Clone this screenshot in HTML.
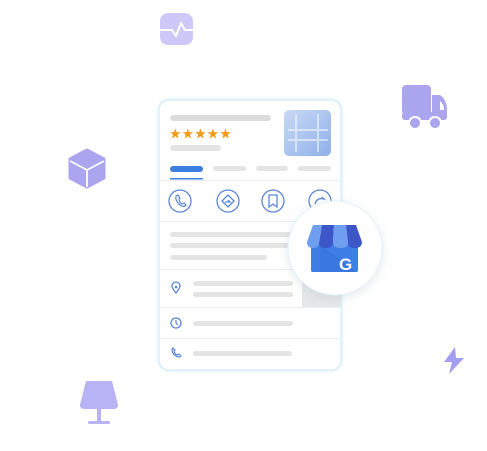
<!DOCTYPE html>
<html><head><meta charset="utf-8"><style>
html,body{margin:0;padding:0;background:#fff;width:487px;height:451px;overflow:hidden}
svg{display:block}
</style></head><body>
<svg width="487" height="451" viewBox="0 0 487 451" xmlns="http://www.w3.org/2000/svg">
<defs>
<filter id="sh" x="-30%" y="-30%" width="160%" height="160%"><feDropShadow dx="0" dy="3" stdDeviation="5" flood-color="#8aa" flood-opacity="0.25"/></filter>
<filter id="cs" x="-10%" y="-10%" width="120%" height="120%"><feDropShadow dx="0" dy="0" stdDeviation="2" flood-color="#9cd8f0" flood-opacity="0.5"/></filter>
<linearGradient id="img" x1="0" y1="0" x2="1" y2="1"><stop offset="0" stop-color="#c9d9f5"/><stop offset="1" stop-color="#8fb0ea"/></linearGradient>
</defs>
<rect x="160" y="13" width="33" height="32" rx="8" fill="#cdc8f7"/>
<path d="M160 30H172L176 36L181 23L185 30H193" stroke="#fff" stroke-width="2" fill="none" stroke-linejoin="round"/>
<rect x="402" y="85" width="29" height="30" rx="4" fill="#aaa5ee"/>
<path d="M432 95H440Q447 100 447 110V118H432Z" fill="#aaa5ee"/>
<rect x="402" y="112" width="45" height="8" rx="3" fill="#aaa5ee"/>
<path d="M440 101Q444 104 444 110H440Z" fill="#fff"/>
<circle cx="415" cy="123" r="7" fill="#fff"/><circle cx="415" cy="123" r="5" fill="#aaa5ee"/>
<circle cx="435" cy="123" r="7" fill="#fff"/><circle cx="435" cy="123" r="5" fill="#aaa5ee"/>
<path d="M87 150L104 159V178L87 187L70 178V159Z" fill="#aaa5ee" stroke="#aaa5ee" stroke-width="3" stroke-linejoin="round"/>
<path d="M70 161L87 170L104 161M87 170V187" stroke="#fff" stroke-width="1.8" fill="none"/>
<path d="M86 381H112L118 405Q118 409 114 409H84Q80 409 80 405Z" fill="#b7b3f4"/>
<rect x="97" y="408" width="4" height="14" fill="#b7b3f4"/>
<rect x="88" y="421" width="22" height="3" rx="1.5" fill="#b7b3f4"/>
<path d="M455 347L444 362H452L449 374L464 358H456Z" fill="#a39df0"/>
<rect x="159" y="100" width="182" height="270" rx="10" fill="#fff" stroke="#d6ecf8" stroke-width="1.2" filter="url(#cs)"/>
<rect x="170" y="115" width="101" height="6" rx="3" fill="#dcdcdc"/>
<text x="169" y="138.5" fill="#f29a12" font-family="Liberation Sans, DejaVu Sans, sans-serif" font-size="14">★★★★★</text>
<rect x="170" y="145" width="51" height="6" rx="3" fill="#e4e4e4"/>
<rect x="284" y="110" width="47" height="46" rx="5" fill="url(#img)"/>
<path d="M288 130h40M288 140h40M296 114v38M318 114v38" stroke="#fff" stroke-opacity=".5" stroke-width="2"/>
<rect x="170" y="166" width="33" height="6" rx="3" fill="#3d7fe0"/>
<rect x="213" y="166" width="33" height="5" rx="2.5" fill="#e4e4e4"/>
<rect x="256" y="166" width="32" height="5" rx="2.5" fill="#e4e4e4"/>
<rect x="298" y="166" width="33" height="5" rx="2.5" fill="#e4e4e4"/>
<rect x="170" y="178" width="33" height="1.5" fill="#3d7fe0"/>
<rect x="160" y="180" width="180" height="1" fill="#eceef0"/>
<g fill="none" stroke="#5a86d6" stroke-width="1.3">
<circle cx="180" cy="201" r="11"/><circle cx="228" cy="201" r="11"/><circle cx="273" cy="201" r="11"/><circle cx="320" cy="201" r="11"/>
<path d="M176 196q-1 5 4 9q4 3 6 0l-2-2-2 1q-3-2-3-5l1-1-2-3z" stroke-width="1.2"/>
<path d="M228 195l6 6-6 6-6-6z"/><path d="M225 202h5l-2-2"/>
<path d="M269 195h8v12l-4-3-4 3z"/>
<path d="M315 204q2-7 9-5l-2-2"/>
</g>
<rect x="160" y="221" width="180" height="1" fill="#eceef0"/>
<rect x="170" y="232" width="123" height="5" rx="2.5" fill="#e4e4e4"/>
<rect x="170" y="243" width="123" height="5" rx="2.5" fill="#e4e4e4"/>
<rect x="170" y="255" width="97" height="5" rx="2.5" fill="#e4e4e4"/>
<rect x="160" y="269" width="180" height="1" fill="#eceef0"/>
<rect x="302" y="280" width="39" height="27" fill="#e6e7ea"/>
<path d="M176 293q-4-5-4-7a4 4 0 0 1 8 0q0 2-4 7z" fill="none" stroke="#5a86d6" stroke-width="1.3"/><circle cx="176" cy="287" r="1.3" fill="#5a86d6"/>
<rect x="193" y="281" width="100" height="5" rx="2.5" fill="#e4e4e4"/>
<rect x="193" y="292" width="100" height="5" rx="2.5" fill="#e4e4e4"/>
<rect x="160" y="307" width="180" height="1" fill="#eceef0"/>
<circle cx="176" cy="323" r="5" fill="none" stroke="#5a86d6" stroke-width="1.3"/><path d="M176 320v3l2 2" stroke="#5a86d6" stroke-width="1.2" fill="none"/>
<rect x="193" y="321" width="100" height="5" rx="2.5" fill="#e4e4e4"/>
<rect x="160" y="338" width="180" height="1" fill="#eceef0"/>
<path d="M172 349q0 5 4 7q3 2 5 0l-2-2-1.5 1q-3-1-3.5-4l1-1-2-2z" fill="none" stroke="#5a86d6" stroke-width="1.2"/>
<rect x="193" y="351" width="99" height="5" rx="2.5" fill="#e4e4e4"/>
<circle cx="335" cy="248" r="47" fill="#fff" stroke="#e4f2fa" stroke-width="1" filter="url(#sh)"/>
<rect x="311" y="242" width="47" height="30" rx="2" fill="#3e7ee6"/>
<path d="M320 245L358 272H320Z" fill="#346fd8" opacity=".4"/>
<path d="M313 225H322L319 243Q319 248 313 248Q307 248 307 242Z" fill="#6f9df0"/>
<path d="M322 225H334L333 243Q333 248 326 248Q319 248 319 243Z" fill="#3d57c9"/>
<path d="M334 225H346L348 243Q348 248 341 248Q333 248 333 243Z" fill="#6f9df0"/>
<path d="M346 225H356L362 242Q362 248 355 248Q348 248 348 243Z" fill="#3d57c9"/>
<text x="339" y="270" font-family="Liberation Sans, sans-serif" font-weight="bold" font-size="17" fill="#fff">G</text>
</svg>
</body></html>
